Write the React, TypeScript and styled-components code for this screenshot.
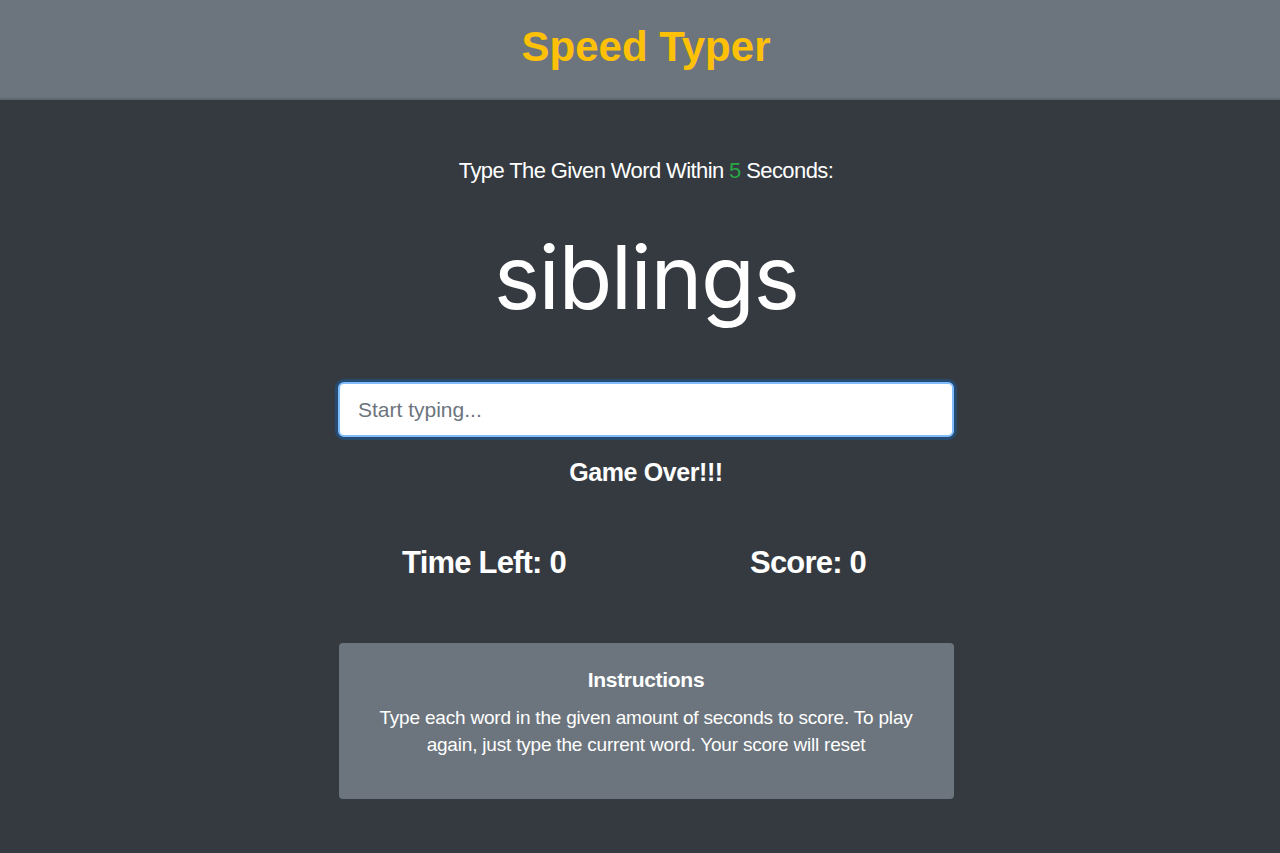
import React from "react";
import styled, { createGlobalStyle } from "styled-components";

const GlobalStyle = createGlobalStyle`
  html, body {
    margin: 0;
    padding: 0;
    background: #343a40;
    font-family: "Liberation Sans", Arial, sans-serif;
  }
  * { box-sizing: border-box; }
`;

const App = () => {
  return (
    <>
      <GlobalStyle />
      <StyledRoot>
        <Header>
          <Title>Speed Typer</Title>
        </Header>
        <Main>
          <Prompt>
            Type The Given Word Within <Seconds>5</Seconds> Seconds:
          </Prompt>
          <Word>siblings</Word>
          <TypeInput placeholder="Start typing..." autoFocus />
          <Status>Game Over!!!</Status>
          <StatsRow>
            <Stat>Time Left: 0</Stat>
            <Stat>Score: 0</Stat>
          </StatsRow>
          <InstructionsCard>
            <CardTitle>Instructions</CardTitle>
            <CardText>
              Type each word in the given amount of seconds to score. To play
              again, just type the current word. Your score will reset
            </CardText>
          </InstructionsCard>
        </Main>
      </StyledRoot>
    </>
  );
};

export default App;

const StyledRoot = styled.div`
  min-height: 853px;
  display: flex;
  flex-direction: column;
  background: #343a40;
`;

const Header = styled.header`
  height: 100px;
  padding-left: 12px;
  background: #6c757d;
  border-bottom: 2px solid #5f676f;
  display: flex;
  align-items: center;
  justify-content: center;
`;

const Title = styled.h1`
  margin: 0 0 4px;
  color: #ffc107;
  font-size: 42px;
  font-weight: 700;
  letter-spacing: 0;
`;

const Main = styled.main`
  width: 616px;
  margin-left: calc(50% - 302px);
  display: flex;
  flex-direction: column;
  align-items: center;
  padding-top: 58px;
`;

const Prompt = styled.p`
  margin: 0;
  color: #ffffff;
  font-size: 22px;
  line-height: 26px;
  letter-spacing: -0.6px;
`;

const Seconds = styled.span`
  color: #28a745;
`;

const Word = styled.h2`
  margin: 38px 0 0;
  color: #ffffff;
  font-family: Inter, Roboto, "Liberation Sans", sans-serif;
  font-weight: 400;
  font-size: 88px;
  line-height: 110px;
  letter-spacing: -1.5px;
`;

const TypeInput = styled.input`
  margin-top: 50px;
  width: 616px;
  height: 55px;
  padding: 0 18px;
  border: 2px solid #80bdff;
  border-radius: 6px;
  background: #ffffff;
  box-shadow: 0 0 0 3px rgba(0, 123, 255, 0.25);
  font-family: "Liberation Sans", Arial, sans-serif;
  font-size: 21px;
  color: #495057;
  outline: none;
  caret-color: #495057;

  &::placeholder {
    color: #6c757d;
  }
`;

const Status = styled.h3`
  margin: 20px 0 0;
  color: #ffffff;
  font-size: 25px;
  line-height: 30px;
  font-weight: 700;
  letter-spacing: -0.4px;
`;

const StatsRow = styled.div`
  width: 648px;
  display: grid;
  grid-template-columns: 1fr 1fr;
  margin-top: 56px;
`;

const Stat = styled.h2`
  margin: 0;
  text-align: center;
  color: #ffffff;
  font-size: 31px;
  line-height: 40px;
  font-weight: 700;
  letter-spacing: -0.8px;
`;

const InstructionsCard = styled.section`
  margin-top: 60px;
  width: 615px;
  height: 156px;
  background: #6c757d;
  border-radius: 4px;
  padding: 25px 38px;
  text-align: center;
  color: #ffffff;
`;

const CardTitle = styled.h5`
  margin: 0;
  font-size: 21px;
  line-height: 24px;
  font-weight: 700;
  letter-spacing: -0.3px;
`;

const CardText = styled.p`
  margin: 12px 0 0;
  font-size: 19px;
  line-height: 27px;
  letter-spacing: -0.2px;
`;
